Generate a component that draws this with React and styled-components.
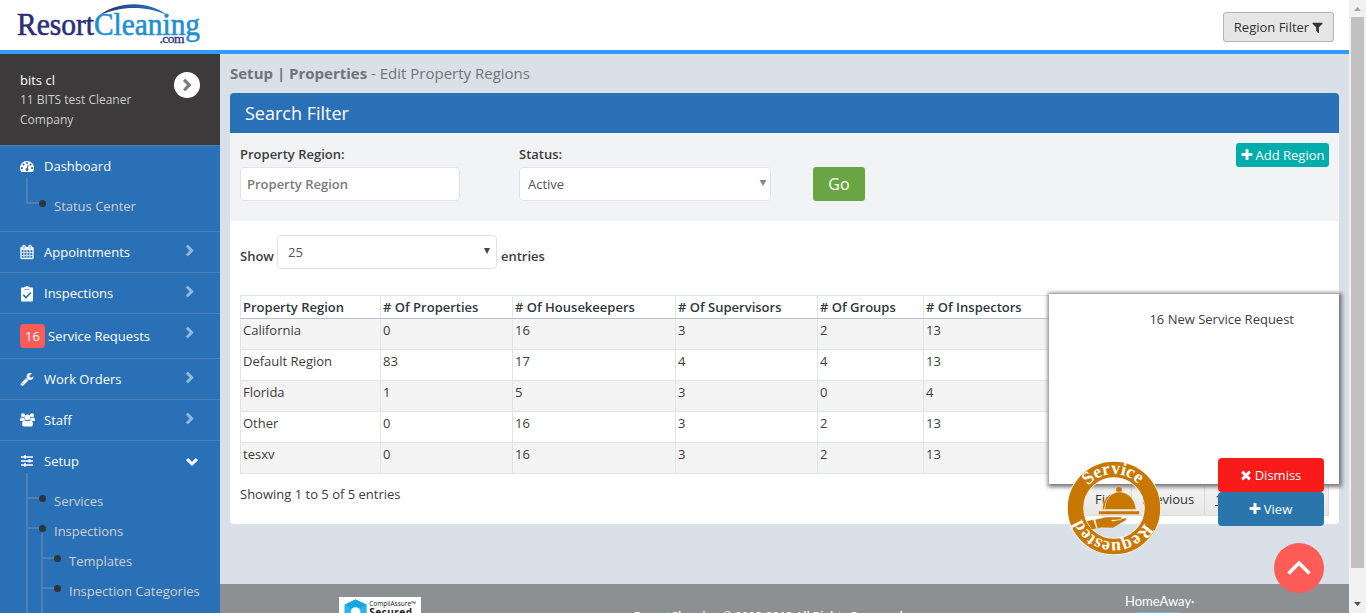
import React from "react";
import styled, { createGlobalStyle, css } from "styled-components";

const GlobalStyle = createGlobalStyle`
  *, *::before, *::after { box-sizing: border-box; }
  body { margin: 0; overflow: hidden; background: #d9e0e7; }
  body, button, input { font-family: "Open Sans", "Liberation Sans", sans-serif; font-size: 13px; color: #3c3c3c; }
  button { cursor: pointer; }
`;

const Shell = styled.div`
  display: flex; width: 1366px; height: 613px; overflow: hidden; position: relative;
`;
const Page = styled.div`flex: 1; display: flex; flex-direction: column; min-width: 0;`;
const Header = styled.header`
  height: 54px; flex: none; background: #fff; border-bottom: 4px solid #339bff;
  display: flex; justify-content: space-between; align-items: flex-start; padding: 0 15px 0 10px;
`;
const FilterButton = styled.button`
  margin-top: 12px; width: 111px; height: 30px; border: 1px solid #b3b3b3; border-radius: 3px;
  background: #e6e6e6; color: #333; display: flex; align-items: center; justify-content: center; gap: 2px; padding: 0 0 0 1px;
  white-space: nowrap;
`;
const Body = styled.div`flex: 1; display: flex; min-height: 0;`;

/* Sidebar */
const Sidebar = styled.nav`width: 220px; flex: none; background: #2a70b6; overflow: hidden;`;
const User = styled.div`
  height: 91px; background: #3c3a3b; padding: 16px 20px 0; display: flex; justify-content: space-between;
`;
const UserName = styled.div`color: #fff; line-height: 20px;`;
const UserCompany = styled.div`color: #ccc; font-size: 12px; line-height: 20px; width: 130px;`;
const Round = styled.button`
  width: 26px; height: 26px; border-radius: 50%; border: 0; padding: 0; margin-top: 2px; background: #fff; color: #777;
  display: flex; align-items: center; justify-content: center;
`;
const Item = styled.div`
  border-top: 1px solid #4a81b7; height: ${(p) => p.$h || 41}px; color: #fff;
`;
const ItemHead = styled.div`
  height: ${(p) => p.$h || 40}px; padding: 0 21px 0 20px; display: flex; align-items: center;
`;
const IconCell = styled.span`width: 14px; height: 16px; margin-right: 10px; display: flex; align-items: center; justify-content: center;`;
const Label = styled.span`flex: 1; line-height: 18px; padding-top: ${(p) => (p.$counted ? 2 : 0)}px;`;
const Caret = styled.span`
  display: flex; padding-bottom: ${(p) => p.$lift || 0}px; color: ${(p) => (p.$open ? "#fff" : "#94b7db")};
  margin-right: ${(p) => (p.$open ? 1 : 3)}px;
`;
const Count = styled.span`
  width: 25px; height: 24px; background: #ff5b57; border-radius: 4px; margin: 2px 3px 0 0;
  display: flex; align-items: center; justify-content: center;
`;
const Tree = styled.ul`list-style: none; margin: 0 0 0 26px; padding: 5px 0 0;`;
const SubTree = styled.ul`list-style: none; margin: 0 0 0 -13px; padding: 0;`;
const Branch = styled.li`
  position: relative; padding-left: 28px; line-height: 30px; color: #cfcfcf; white-space: nowrap;
  &::before {
    content: ""; position: absolute; left: 0; top: ${(p) => p.$rise || 0}px; width: 2px; background: #4f82b3;
    ${(p) => (p.$last ? css`height: 26px;` : css`bottom: ${p.$run ? -20 : 0}px;`)}
  }
`;
const Dot = styled.i`
  position: absolute; left: 2px; top: 11px; width: 11px; height: 2px; background: #4f82b3;
  &::after {
    content: ""; position: absolute; left: 11px; top: -2px; width: 7px; height: 7px; border-radius: 50%; background: #2d353c;
  }
`;

/* Content */
const Main = styled.div`flex: 1; min-width: 0; display: flex; flex-direction: column; background: #d9e0e7;`;
const Crumbs = styled.h1`
  margin: 0; height: 39px; padding: 8px 10px 0; font-size: 15px; font-weight: 400; line-height: 22px; color: #707478;
  b { font-weight: 700; }
`;
const Panel = styled.section`margin: 0 10px; background: #fff; border-radius: 4px; height: 431px; overflow: hidden;`;
const PanelHead = styled.h2`
  margin: 0; height: 40px; padding-left: 15px; background: #2a70b6; color: #fff; font-size: 18px; font-weight: 400; line-height: 41px;
`;
const Filters = styled.div`height: 88px; background: #f1f3f5; padding: 10px; display: flex; align-items: flex-start;`;
const Field = styled.label`width: ${(p) => p.$w}px; margin-right: ${(p) => p.$gap}px; font-weight: 600;`;
const FieldName = styled.span`display: block; line-height: 22px; height: 24px;`;
const Input = styled.input`
  display: block; width: 100%; height: 34px; border: 1px solid #dfe3e6; border-radius: 4px; background: #fff; padding: 0 6px; font-weight: 600;
  &::placeholder { color: #7b7b7b; opacity: 1; }
`;
const Select = styled.span`
  width: ${(p) => p.$w || "100%"}; height: 34px; border: 1px solid #dfe3e6; border-radius: 4px; background: #fff;
  display: flex; align-items: center; justify-content: space-between; font-weight: 400; color: #555;
  padding: 0 ${(p) => p.$right || 3}px 0 ${(p) => p.$left || 8}px;
`;
const Arrow = styled.svg`margin-top: -3px; width: 8px; height: 6px; fill: ${(p) => p.$c};`;
const Go = styled.button`
  margin-top: 24px; width: 52px; height: 34px; border: 0; border-radius: 3px; background: #69a542; color: #fff; font-size: 16px;
`;
const Add = styled.button`
  margin-left: auto; width: 93px; height: 24px; border: 0; border-radius: 3px; padding: 0 1px 0 0; background: #00acac; color: #fff;
  display: flex; align-items: center; justify-content: center; gap: 2px; white-space: nowrap;
`;
const Listing = styled.div`padding: 14px 10px;`;
const Length = styled.div`display: flex; gap: 3px; font-weight: 600; & > b { font-weight: 600; line-height: 18px; padding-top: 12px; } & > b:last-child { padding-left: 1px; }`;
const Table = styled.table`
  margin-top: 26px; width: 1089px; table-layout: fixed; border-collapse: collapse; border: 1px solid #dde3e8;
  th, td { border: 1px solid #e0e5e9; padding: 0 2px; text-align: left; line-height: 18px; vertical-align: top; white-space: nowrap; }
  th { height: 23px; padding-top: 2px; font-weight: 600; color: #31373d; border-bottom: 1px solid #b6c2c9; }
  td { height: 31px; padding-top: 2px; }
  tbody tr:nth-child(odd) { background: #f4f4f4; }
`;
const TableFoot = styled.div`display: flex; justify-content: space-between; margin-top: 10px;`;
const Info = styled.div`line-height: 20px;`;
const Pager = styled.div`display: flex; border: 1px solid #ddd; height: 32px;`;
const PageBtn = styled.span`
  width: ${(p) => p.$w}px; border-right: 1px solid #d6d6d6; background: linear-gradient(#f5f5f5, #e6e6e6); line-height: 28px;
  padding-left: 10px; color: #333; text-decoration: ${(p) => (p.$on ? "underline" : "none")};
  &:last-child { border-right: 0; }
`;
const Footer = styled.footer`
  margin-top: auto; height: 29px; background: #8c9093; color: #fff; overflow: hidden; display: flex; align-items: flex-start;
`;
const Secured = styled.div`
  margin: 13px 0 0 119px; width: 82px; height: 40px; background: #fff; display: flex; padding: 2px 5px; gap: 2px;
  color: #222; white-space: nowrap;
`;
const SecuredText = styled.div`font-size: 6.5px; line-height: 8px; padding-top: 1px; b { display: block; font-size: 10px; line-height: 9px; letter-spacing: 0.5px; }`;
const Copyright = styled.div`margin: 24px 0 0 213px; width: 289px; font-size: 11.7px; font-weight: 600; line-height: 16px; white-space: nowrap;`;
const HomeAway = styled.div`
  margin: 9px 0 0 202px; font-family: Lato, sans-serif; font-size: 13px; line-height: 17px; white-space: nowrap; width: 68px;
  &::after { content: ""; display: block; width: 42px; height: 4px; margin: 2px 0 0 12px; background: #5bc0de; }
`;

/* Overlays */
const Notice = styled.aside`
  position: absolute; left: 1049px; top: 294px; width: 290px; height: 190px; background: #fff;
  box-shadow: 1px 1px 4px 2px #777; padding: 15px 45px 0 0; text-align: right; line-height: 20px;
`;
const Actions = styled.div`position: absolute; left: 1218px; top: 458px; width: 106px;`;
const Action = styled.button`
  width: 106px; height: 34px; border: 0; border-radius: 4px; display: flex; align-items: center; justify-content: center; gap: 2px;
  padding: 0 8px 0 6px; color: #fff; background: ${(p) => p.$bg};
`;
const Badge = styled.svg`position: absolute; left: 1067px; top: 461px; width: 94px; height: 94px;`;
const ToTop = styled.button`
  position: absolute; left: 1274px; top: 543px; width: 50px; height: 50px; border-radius: 50%; border: 0; padding: 0; background: #ff5b57;
  display: flex; align-items: center; justify-content: center;
`;
const Rail = styled.div`
  width: 17px; background: #f1f1f1; display: flex; flex-direction: column; align-items: center; padding: 7px 0 0;
`;
const Thumb = styled.div`width: 13px; height: 551px; margin: 6px 0 34px; background: #c1c1c1;`;

const PATHS = {
  right: "M1363 877l-742 742q-19 19-45 19t-45-19l-166-166q-19-19-19-45t19-45l531-531-531-531q-19-19-19-45t19-45l166-166q19-19 45-19t45 19l742 742q19 19 19 45t-19 45z",
  down: "M1683 808l-742 741q-19 19-45 19t-45-19l-742-741q-19-19-19-45.500t19-45.500l166-165q19-19 45-19t45 19l531 531 531-531q19-19 45-19t45 19l166 165q19 19 19 45.500t-19 45.500z",
  plus: "M1600 736v192q0 40-28 68t-68 28h-416v416q0 40-28 68t-68 28h-192q-40 0-68-28t-28-68v-416h-416q-40 0-68-28t-28-68v-192q0-40 28-68t68-28h416v-416q0-40 28-68t68-28h192q40 0 68 28t28 68v416h416q40 0 68 28t28 68z",
  times: "M1490 1322q0 40-28 68l-136 136q-28 28-68 28t-68-28l-294-294-294 294q-28 28-68 28t-68-28l-136-136q-28-28-28-68t28-68l294-294-294-294q-28-28-28-68t28-68l136-136q28-28 68-28t68 28l294 294 294-294q28-28 68-28t68 28l136 136q28 28 28 68t-28 68l-294 294 294 294q28 28 28 68z",
  filter: "M1595 295q17 41-14 70l-493 493v742q0 42-39 59-13 5-25 5-27 0-45-19l-256-256q-19-19-19-45v-486l-493-493q-31-29-14-70 17-39 59-39h1280q42 0 59 39z",
  wrench: "M448 1472q0-26-19-45t-45-19-45 19-19 45 19 45 45 19 45-19 19-45zm644-420l-682 682q-37 37-90 37-52 0-91-37l-106-108q-38-36-38-90 0-53 38-91l681-681q39 98 114.500 173.500t173.500 114.500zm634-435q0 39-23 106-47 134-164.500 217.500t-258.500 83.500q-185 0-316.500-131.500t-131.500-316.500 131.500-316.500 316.500-131.500q58 0 121.500 16.500t107.500 46.500q16 11 16 28t-16 28l-293 169v224l193 107q5-3 79-48.500t135.500-81 70.500-35.500q15 0 23.500 10t8.500 25z",
  gauge: "M384 1152q0-53-37.500-90.500t-90.500-37.500-90.500 37.500-37.500 90.500 37.500 90.500 90.500 37.500 90.500-37.500 37.500-90.500zm192-448q0-53-37.500-90.500t-90.500-37.500-90.500 37.500-37.500 90.500 37.500 90.500 90.500 37.500 90.500-37.500 37.500-90.500zm428 481l101-382q6-26-7.500-48.500t-38.500-29.500-48 6.500-30 39.500l-101 382q-60 5-107 43.500t-63 98.500q-20 77 20 146t117 89 146-20 89-117q16-60-6-117t-72-91zm660-33q0-53-37.500-90.500t-90.500-37.500-90.500 37.500-37.500 90.500 37.500 90.500 90.500 37.500 90.500-37.500 37.500-90.500zm-640-640q0-53-37.500-90.500t-90.500-37.500-90.500 37.500-37.500 90.500 37.500 90.500 90.500 37.500 90.500-37.500 37.500-90.500zm448 192q0-53-37.500-90.500t-90.500-37.500-90.500 37.500-37.500 90.500 37.500 90.500 90.500 37.500 90.500-37.500 37.500-90.500zm320 448q0 261-141 483-19 29-54 29h-1402q-35 0-54-29-141-221-141-483 0-182 71-348t191-286 286-191 348-71 348 71 286 191 191 286 71 348z",
  calendar: "M192 1664h288v-288h-288v288zm352 0h320v-288h-320v288zm-352-352h288v-320h-288v320zm352 0h320v-320h-320v320zm-352-384h288v-288h-288v288zm736 736h320v-288h-320v288zm-384-736h320v-288h-320v288zm768 736h288v-288h-288v288zm-384-352h320v-320h-320v320zm-352-864v-288q0-13-9.500-22.500t-22.500-9.500h-64q-13 0-22.500 9.500t-9.500 22.500v288q0 13 9.500 22.500t22.500 9.500h64q13 0 22.500-9.500t9.500-22.500zm736 864h288v-320h-288v320zm-384-384h320v-288h-320v288zm384 0h288v-288h-288v288zm32-480v-288q0-13-9.500-22.500t-22.500-9.500h-64q-13 0-22.500 9.500t-9.500 22.500v288q0 13 9.500 22.500t22.500 9.500h64q13 0 22.500-9.500t9.500-22.500zm384-64v1280q0 52-38 90t-90 38h-1408q-52 0-90-38t-38-90v-1280q0-52 38-90t90-38h128v-96q0-66 47-113t113-47h64q66 0 113 47t47 113v96h384v-96q0-66 47-113t113-47h64q66 0 113 47t47 113v96h128q52 0 90 38t38 90z",
};
const Svg = styled.svg`flex: none; display: block; fill: currentColor; overflow: visible;`;
const Icon = ({ name, size = 13, bold = 0 }) => (
  <Svg width={size} height={size} viewBox="0 0 1792 1792"><path d={PATHS[name]} stroke="currentColor" strokeWidth={bold} /></Svg>
);
const Clipboard = () => (
  <Svg width="12" height="16" viewBox="0 -0.6 12 16">
    <path d="M1 2h2.300V1.200h1.400a1.400 1.400 0 0 1 2.600 0h1.400V2H11a1 1 0 0 1 1 1v12a1 1 0 0 1-1 1H1a1 1 0 0 1-1-1V3a1 1 0 0 1 1-1z" />
    <path d="M3.300 3.800h5.400" stroke="#2a70b6" strokeWidth=".6" />
    <path d="M2.300 9.300l2.600 2.600 5-5" fill="none" stroke="#2a70b6" strokeWidth="1.700" />
  </Svg>
);
const Group = () => (
  <Svg width="15" height="14" viewBox="0 0 15 14">
    <circle cx="3" cy="2.300" r="2" /><circle cx="12" cy="2.300" r="2" /><circle cx="7.500" cy="4.300" r="2.900" />
    <path d="M0 7.400C0 5.500.6 4.400 1.500 4.400c.6.500 1.800.7 2.700.3.100 1 .4 1.700.9 2.300-1 .1-1.700.5-2.200 1.100H1.400C.6 8.100 0 7.900 0 7.400zM15 7.400c0-1.900-.6-3-1.500-3-.6.500-1.800.7-2.700.3-.1 1-.4 1.700-.9 2.300 1 .1 1.700.5 2.200 1.100h1.500c.8 0 1.400-.2 1.400-.7z" />
    <path d="M2 11.300C2 8.800 3 7.300 4.500 7.200c1.800 1.300 4.200 1.300 6 0C12 7.300 13 8.800 13 11.300c0 1.200-.7 2.200-2 2.200H4c-1.300 0-2-1-2-2.200z" />
  </Svg>
);
const Sliders = () => (
  <Svg width="12" height="12" viewBox="0 0 12 12">
    <path d="M0 1.300h12v1.400H0zM0 5.300h12v1.400H0zM0 9.300h12v1.400H0z" />
    <path d="M3 .3h2v3.300H3zM7.500 4.300h2v3.300h-2zM3 8.300h2v3.300H3z" />
  </Svg>
);

const Logo = () => (
  <svg width="196" height="50" viewBox="10 0 196 50" fontFamily="Liberation Serif, serif">
    <defs>
      <linearGradient id="arc"><stop offset="0" stopColor="#2b2f77" /><stop offset="1" stopColor="#1f7fc4" /></linearGradient>
    </defs>
    <path d="M99 15.500C116 1.500 148 -.5 167 15C146 5.500 121 5.500 99 15.500z" fill="url(#arc)" />
    <circle cx="166.500" cy="15.500" r="2" fill="#1f7fc4" />
    <text x="17" y="35" fontSize="30.500" fill="#2b2f77" stroke="#2b2f77" strokeWidth=".6" textLength="77" lengthAdjust="spacingAndGlyphs">Resort</text>
    <text x="94" y="35" fontSize="30.500" fill="#1f8fd3" stroke="#1f8fd3" strokeWidth=".6" textLength="106" lengthAdjust="spacingAndGlyphs">Cleaning</text>
    <text x="159.500" y="43" fontSize="13.500" fill="#2b2f77" stroke="#2b2f77" strokeWidth=".3" textLength="25">.com</text>
  </svg>
);

const MenuItem = ({ icon, count, label, h, headH, open, plain, lift = 2, children }) => (
  <Item $h={h}>
    <ItemHead $h={headH}>
      {count ? <Count>{count}</Count> : <IconCell>{icon}</IconCell>}
      <Label $counted={!!count}>{label}</Label>
      {!plain && <Caret $open={open} $lift={open ? 1 : lift}><Icon name={open ? "down" : "right"} size={12} bold={110} /></Caret>}
    </ItemHead>
    {children}
  </Item>
);

const COLUMNS = [["Property Region", 140], ["# Of Properties", 132], ["# Of Housekeepers", 163], ["# Of Supervisors", 142], ["# Of Groups", 106], ["# Of Inspectors", 406]];
const ROWS = [
  ["California", 0, 16, 3, 2, 13],
  ["Default Region", 83, 17, 4, 4, 13],
  ["Florida", 1, 5, 3, 0, 4],
  ["Other", 0, 16, 3, 2, 13],
  ["tesxv", 0, 16, 3, 2, 13],
];

export default function App() {
  return (
    <Shell>
      <GlobalStyle />
      <Page>
        <Header>
          <Logo />
          <FilterButton>Region Filter <Icon name="filter" size={13} /></FilterButton>
        </Header>
        <Body>
          <Sidebar>
            <User>
              <div>
                <UserName>bits cl</UserName>
                <UserCompany>11 BITS test Cleaner Company</UserCompany>
              </div>
              <Round><Icon name="right" size={13} bold={90} /></Round>
            </User>
            <MenuItem icon={<Icon name="gauge" size={14} />} label="Dashboard" h={86} plain>
              <Tree><Branch $rise={-13} $last><Dot />Status Center</Branch></Tree>
            </MenuItem>
            <MenuItem icon={<Icon name="calendar" size={14} bold={40} />} label="Appointments" />
            <MenuItem icon={<Clipboard />} label="Inspections" />
            <MenuItem count="16" label="Service Requests" h={45} headH={42} lift={4} />
            <MenuItem icon={<Icon name="wrench" size={14} />} label="Work Orders" />
            <MenuItem icon={<Group />} label="Staff" />
            <MenuItem icon={<Sliders />} label="Setup" h={173} open>
              <Tree>
                <Branch $rise={-13}><Dot />Services</Branch>
                <Branch $run>
                  <Dot />Inspections
                  <SubTree>
                    <Branch $rise={-13}><Dot />Templates</Branch>
                    <Branch $run><Dot />Inspection Categories</Branch>
                  </SubTree>
                </Branch>
              </Tree>
            </MenuItem>
          </Sidebar>
          <Main>
            <Crumbs><b>Setup | Properties</b> - Edit Property Regions</Crumbs>
            <Panel>
              <PanelHead>Search Filter</PanelHead>
              <Filters>
                <Field $w={220} $gap={59}><FieldName>Property Region:</FieldName><Input placeholder="Property Region" /></Field>
                <Field $w={252} $gap={42}>
                  <FieldName>Status:</FieldName>
                  <Select>Active<Arrow viewBox="0 0 8 6" $c="#888"><path d="M.5 0h7L4 6z" /></Arrow></Select>
                </Field>
                <Go>Go</Go>
                <Add><Icon name="plus" size={14} />Add Region</Add>
              </Filters>
              <Listing>
                <Length>
                  <b>Show</b>
                  <Select $w="220px" $left={10} $right={5}>25<Arrow viewBox="0 0 8 6" $c="#444"><path d="M1 0h6L4 6z" /></Arrow></Select>
                  <b>entries</b>
                </Length>
                <Table>
                  <colgroup>{COLUMNS.map(([n, w]) => <col key={n} width={w} />)}</colgroup>
                  <thead><tr>{COLUMNS.map(([n]) => <th key={n}>{n}</th>)}</tr></thead>
                  <tbody>{ROWS.map((r) => <tr key={r[0]}>{r.map((v, i) => <td key={i}>{v}</td>)}</tr>)}</tbody>
                </Table>
                <TableFoot>
                  <Info>Showing 1 to 5 of 5 entries</Info>
                  <Pager>
                    <PageBtn $w={47}>First</PageBtn><PageBtn $w={73}>Previous</PageBtn><PageBtn $w={28} $on>1</PageBtn>
                    <PageBtn $w={48}>Next</PageBtn><PageBtn $w={47}>Last</PageBtn>
                  </Pager>
                </TableFoot>
              </Listing>
            </Panel>
            <Footer>
              <Secured>
                <svg width="24" height="26" viewBox="0 0 24 26">
                  <path d="M12 0l11.500 5.500v14L12 26 .5 19.500v-14z" fill="#29b6e8" /><path d="M12 0l11.500 5.500L12 12 .5 5.500z" fill="#16a5dc" />
                  <circle cx="12" cy="13" r="5" fill="#fff" />
                </svg>
                <SecuredText>CompliAssure™<b>Secured</b></SecuredText>
              </Secured>
              <Copyright>ResortCleaning © 2003-2019 All Rights Reserved.</Copyright>
              <HomeAway>HomeAway·</HomeAway>
            </Footer>
          </Main>
        </Body>
      </Page>
      <Rail>
        <svg width="7" height="4"><path d="M0 4h7L3.500 0z" fill="#a3a3a3" /></svg>
        <Thumb />
        <svg width="7" height="4"><path d="M0 0h7L3.500 4z" fill="#505050" /></svg>
      </Rail>

      <Notice>16 New Service Request</Notice>
      <Badge viewBox="0 0 94 94">
        <defs>
          <path id="ringTop" d="M13 47a34 34 0 0 1 68 0" />
          <path id="ringBottom" d="M81 47a34 34 0 0 1-68 0" />
        </defs>
        <circle cx="47" cy="47" r="38.500" fill="none" stroke="#fff" strokeWidth="17" />
        <circle cx="47" cy="47" r="38.500" fill="none" stroke="#c87800" strokeWidth="15.500" />
        <g fill="#fff" fontFamily="Liberation Serif, serif" fontWeight="700" fontSize="18" textAnchor="middle">
          <text textLength="56"><textPath href="#ringTop" startOffset="49%">Service</textPath></text>
          <text textLength="80"><textPath href="#ringBottom" startOffset="52%">Requested</textPath></text>
        </g>
        <g fill="#c87800" stroke="#fff" strokeWidth=".4">
          <circle cx="52" cy="28.500" r="3.200" />
          <path d="M37.500 48.500c.6-10.500 6.500-17.500 15-17.500s15.500 7 16.500 17.500z" />
          <path d="M35.500 48.500c0-8 4-14.500 11-16.500-5 3-8.500 9-9 16.500z" />
          <path d="M31.500 50h41v3.500h-41z" />
          <path d="M19.500 60l7-1.500 3 9-4.500 1.500zM28 58.500l11-2.500h15c1.500 1 .5 3-1.500 3h-8l1 1.200 12.500-3.200c2-.2 2 1.500.5 2.500L46 67l-12-.3-3.500 1z" />
        </g>
      </Badge>
      <Actions>
        <Action $bg="#f91a1a"><Icon name="times" size={14} />Dismiss</Action>
        <Action $bg="#2975ac"><Icon name="plus" size={14} />View</Action>
      </Actions>
      <ToTop>
        <svg width="26" height="16" viewBox="0 0 26 16"><path d="M2.500 13.500L13 3l10.500 10.500" fill="none" stroke="#fff" strokeWidth="3.600" /></svg>
      </ToTop>
    </Shell>
  );
}
